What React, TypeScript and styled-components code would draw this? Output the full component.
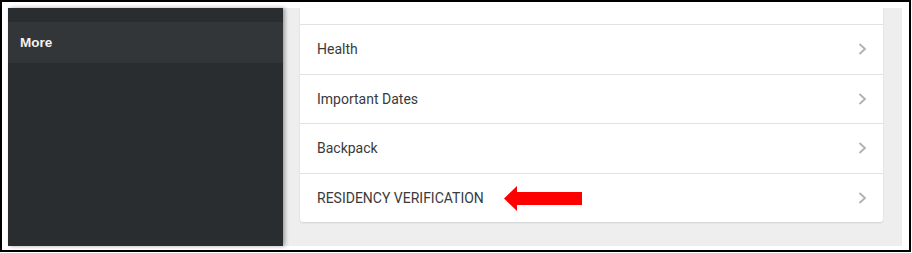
import styled, { createGlobalStyle } from 'styled-components'

const GlobalStyle = createGlobalStyle`
  html, body {
    margin: 0;
    padding: 0;
    background: #fff;
  }
`

const Frame = styled.div`
  box-sizing: border-box;
  width: 911px;
  height: 252px;
  border: 2px solid #000;
  padding: 6px 7px 4px 6px;
  display: flex;
`

const Sidebar = styled.aside`
  width: 275px;
  flex-shrink: 0;
  background: #2a2d2f;
  padding-top: 14px;
  box-shadow: 2px 0 4px rgba(0, 0, 0, 0.35);
  position: relative;
  z-index: 1;
`

const SidebarItem = styled.div`
  height: 41px;
  display: flex;
  align-items: center;
  padding-left: 12px;
  background: #323638;
  color: #f2f2f2;
  font-family: "Liberation Sans", Arial, sans-serif;
  font-weight: bold;
  font-size: 13.5px;
`

const Main = styled.main`
  flex: 1;
  background: #eeeeee;
  padding: 0 19px 25px 17px;
`

const Card = styled.div`
  background: #fff;
  border-radius: 0 0 3px 3px;
  box-shadow: 0 1px 2px rgba(0, 0, 0, 0.12);
`

const Row = styled.div<{ $partial?: boolean }>`
  height: ${(props) => (props.$partial ? 16 : 48.5)}px;
  display: flex;
  align-items: center;
  padding: 0 16px 0 17px;
  border-top: ${(props) => (props.$partial ? 'none' : '1px solid #e2e2e2')};
  font-family: Roboto, "Liberation Sans", sans-serif;
  font-size: 14px;
  color: #3a3a3a;
`

const Label = styled.span`
  flex: 1;
  display: flex;
  align-items: center;
`

const Pointer = styled.svg`
  margin-left: 20px;
  margin-top: 2px;
`

const Chevron = () => (
  <svg width="9" height="12" viewBox="0 0 9 12">
    <polyline points="1.5,1 7,6 1.5,11" fill="none" stroke="#b0b0b0" strokeWidth="1.8" />
  </svg>
)

const items = ['Health', 'Important Dates', 'Backpack', 'RESIDENCY VERIFICATION']

export default function App() {
  return (
    <>
      <GlobalStyle />
      <Frame>
        <Sidebar>
          <SidebarItem>More</SidebarItem>
        </Sidebar>
        <Main>
          <Card>
            <Row $partial />
            {items.map((item, i) => (
              <Row key={item}>
                <Label>
                  {item}
                  {i === items.length - 1 && (
                    <Pointer width="78" height="25" viewBox="0 0 78 25">
                      <polygon points="0,12.5 13,0 13,6 78,6 78,19 13,19 13,25" fill="#ff0000" />
                    </Pointer>
                  )}
                </Label>
                <Chevron />
              </Row>
            ))}
          </Card>
        </Main>
      </Frame>
    </>
  )
}
